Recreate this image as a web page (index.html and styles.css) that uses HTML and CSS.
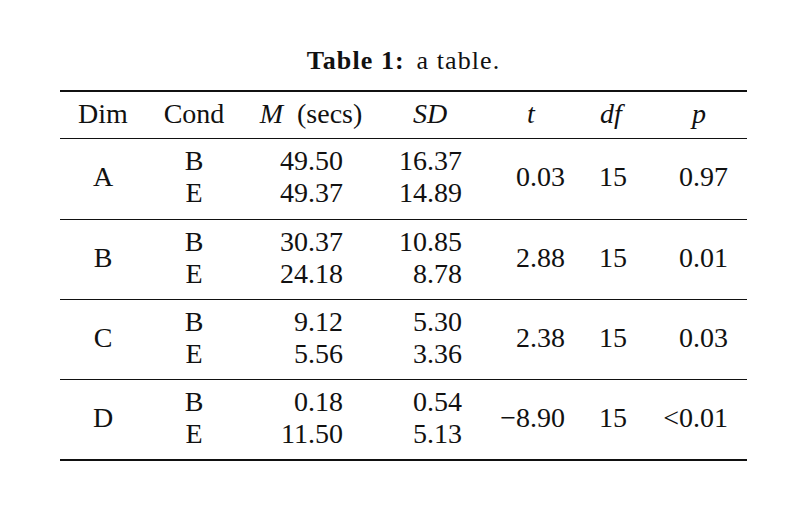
FILE: index.html
```
<!DOCTYPE html>
<html lang="en">
<head>
  <meta charset="UTF-8">
  <meta name="viewport" content="width=device-width, initial-scale=1.0">
  <title>Table 1</title>
  <link rel="stylesheet" href="styles.css">
</head>
<body>
  <div class="figure">
    <div class="caption"><strong>Table 1:</strong> a table.</div>

    <div class="table">
      <div class="row head">
        <div class="cell">Dim</div>
        <div class="cell">Cond</div>
        <div class="cell"><i>M</i>&nbsp; (secs)</div>
        <div class="cell"><i>SD</i></div>
        <div class="cell"><i>t</i></div>
        <div class="cell"><i>df</i></div>
        <div class="cell col-p"><i>p</i></div>
      </div>

      <div class="row group">
        <div class="cell">A</div>
        <div class="cell"><span>B</span><span>E</span></div>
        <div class="cell num col-m"><span>49.50</span><span>49.37</span></div>
        <div class="cell num col-sd"><span>16.37</span><span>14.89</span></div>
        <div class="cell num col-t">0.03</div>
        <div class="cell col-df">15</div>
        <div class="cell num col-p">0.97</div>
      </div>

      <div class="row group">
        <div class="cell">B</div>
        <div class="cell"><span>B</span><span>E</span></div>
        <div class="cell num col-m"><span>30.37</span><span>24.18</span></div>
        <div class="cell num col-sd"><span>10.85</span><span>8.78</span></div>
        <div class="cell num col-t">2.88</div>
        <div class="cell col-df">15</div>
        <div class="cell num col-p">0.01</div>
      </div>

      <div class="row group">
        <div class="cell">C</div>
        <div class="cell"><span>B</span><span>E</span></div>
        <div class="cell num col-m"><span>9.12</span><span>5.56</span></div>
        <div class="cell num col-sd"><span>5.30</span><span>3.36</span></div>
        <div class="cell num col-t">2.38</div>
        <div class="cell col-df">15</div>
        <div class="cell num col-p">0.03</div>
      </div>

      <div class="row group">
        <div class="cell">D</div>
        <div class="cell"><span>B</span><span>E</span></div>
        <div class="cell num col-m"><span>0.18</span><span>11.50</span></div>
        <div class="cell num col-sd"><span>0.54</span><span>5.13</span></div>
        <div class="cell num col-t">&minus;8.90</div>
        <div class="cell col-df">15</div>
        <div class="cell num col-p">&lt;0.01</div>
      </div>
    </div>
  </div>
</body>
</html>
```

FILE: styles.css
```
* {
  margin: 0;
  padding: 0;
  box-sizing: border-box;
}

body {
  background-color: #ffffff;
  color: #111111;
  font-family: 'Liberation Serif', 'Times New Roman', serif;
}

.figure {
  width: 687px;
  margin-left: 60px;
}

.caption {
  padding-top: 45px;
  margin-bottom: 13px;
  font-size: 26px;
  line-height: 32px;
  letter-spacing: 1.1px;
  text-align: center;
}

.caption strong {
  font-weight: 700;
  margin-right: 4px;
}

.table {
  border-top: 2px solid #111;
  border-bottom: 2px solid #111;
  font-size: 28px;
  line-height: 32px;
}

.row {
  display: grid;
  grid-template-columns: 86px 96px 138px 100px 102px 58px 107px;
}

.head {
  height: 47px;
  padding-top: 6px;
  border-bottom: 1px solid #111;
  text-align: center;
}

.group {
  height: 80px;
  align-items: center;
  padding-bottom: 4px;
  text-align: center;
}

.group + .group {
  border-top: 1px solid #111;
}

.cell span {
  display: block;
}

.num {
  text-align: right;
}

.col-m {
  padding-right: 37px;
}

.col-sd {
  padding-right: 18px;
}

.col-t {
  padding-right: 17px;
}

.col-df {
  padding-left: 4px;
}

.head .col-p {
  padding-left: 11px;
}

.group .col-p {
  padding-right: 19px;
}
```
